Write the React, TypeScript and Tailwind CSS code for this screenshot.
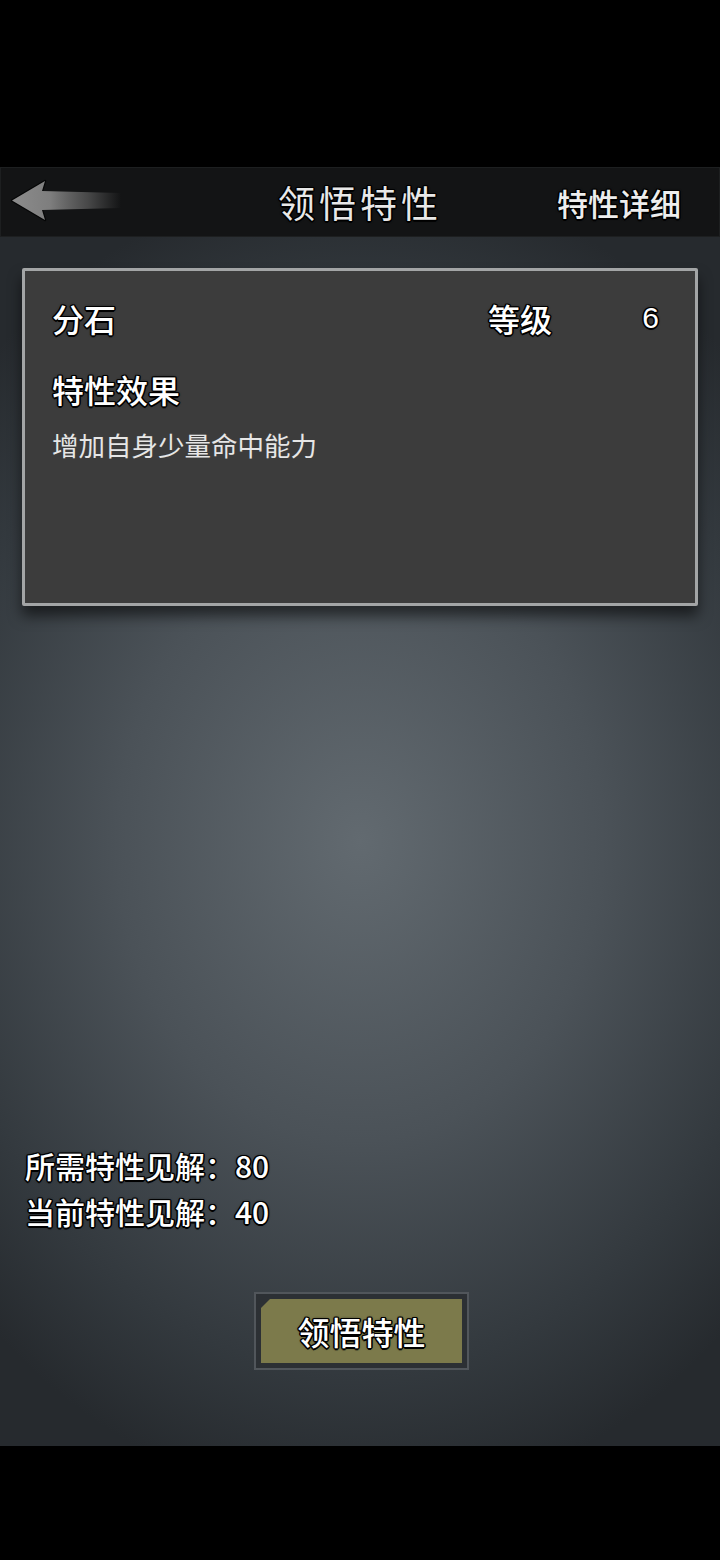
import React from "react";

const stroke =
  "[text-shadow:-1px_-1px_0_#000,1px_-1px_0_#000,-1px_1px_0_#000,1px_1px_0_#000,0_-1.5px_0_#000,0_1.5px_0_#000,-1.5px_0_0_#000,1.5px_0_0_#000,0_0_3px_#000]";

const font = "font-['Noto_Sans_CJK_SC','Noto_Sans',sans-serif]";

function BackArrow() {
  return (
    <svg width="112" height="46" viewBox="0 0 112 46">
      <defs>
        <linearGradient id="shaft" x1="0" y1="0" x2="1" y2="0">
          <stop offset="0" stopColor="#8c8c8c" />
          <stop offset="0.35" stopColor="#7e7e7e" />
          <stop offset="0.7" stopColor="#6a6a6a" stopOpacity="0.6" />
          <stop offset="1" stopColor="#666" stopOpacity="0" />
        </linearGradient>
      </defs>
      <path
        d="M31 12 L34 2 L1 21.5 L34 41 L31 31"
        fill="none"
        stroke="#000"
        strokeOpacity="0.7"
        strokeWidth="2.5"
        strokeLinejoin="round"
      />
      <path d="M1 21.5 L34 2 L31 12 L110 14 L110 29 L31 31 L34 41 Z" fill="url(#shaft)" />
    </svg>
  );
}

export default function App() {
  return (
    <div className={`w-[720px] h-[1560px] bg-black flex flex-col ${font}`}>
      <div className="h-[167px] bg-black" />
      <header className="h-[70px] bg-[#131415] border border-[#1d1f20] flex items-center pl-[10px] pr-[38px]">
        <div className="w-[130px] flex items-center">
          <BackArrow />
        </div>
        <div className="flex-1 flex justify-center pl-[22px]">
          <span className={`text-[37px] leading-none tracking-[4px] text-[#e8e8e8] ${stroke}`}>领悟特性</span>
        </div>
        <span className={`text-[31px] font-medium leading-none text-[#ededed] ${stroke}`}>特性详细</span>
      </header>
      <main className="h-[1209px] flex flex-col px-[22px] pt-[31px] pb-[76px] bg-[radial-gradient(ellipse_75%_55%_at_50%_50%,#626a70_0%,#4b5258_45%,#33393e_80%,#262a2e_100%)]">
        <section className="h-[338px] bg-[#3c3c3c] border-[3px] border-[#a3a5a6] rounded-[2px] shadow-[0_10px_14px_rgba(0,0,0,0.55)] px-[27px] pt-[25px] flex flex-col">
          <div className="flex items-center h-[44px]">
            <span className={`text-[32px] font-medium leading-none text-white ${stroke}`}>分石</span>
            <span className="flex-1" />
            <span className={`text-[32px] font-medium leading-none text-white ${stroke}`}>等级</span>
            <span className={`w-[116px] text-right pr-[9px] text-[30px] leading-none text-white font-['Liberation_Sans',sans-serif] ${stroke}`}>6</span>
          </div>
          <div className="h-[27px]" />
          <div className={`text-[32px] font-medium leading-[44px] text-white ${stroke}`}>特性效果</div>
          <div className="h-[14px]" />
          <div className="text-[26.5px] leading-[40px] text-[#e6e6e6]">增加自身少量命中能力</div>
        </section>
        <div className="flex-1" />
        <div className="flex flex-col pl-[3px]">
          <div className={`text-[30px] font-medium leading-[46px] text-white ${stroke}`}>所需特性见解：80</div>
          <div className={`text-[30px] font-medium leading-[46px] text-white ${stroke}`}>当前特性见解：40</div>
        </div>
        <div className="h-[58px]" />
        <div className="flex justify-center">
          <div className="w-[215px] h-[78px] border-2 border-[#51565b] bg-[#2c3034] p-[5px] ml-[3px]">
            <div className="w-full h-full bg-[#7c7a4b] [clip-path:polygon(9px_0,100%_0,100%_100%,0_100%,0_9px)] flex items-center justify-center">
              <span className={`text-[32px] font-medium leading-none text-white ${stroke}`}>领悟特性</span>
            </div>
          </div>
        </div>
      </main>
      <div className="flex-1 bg-black" />
    </div>
  );
}
